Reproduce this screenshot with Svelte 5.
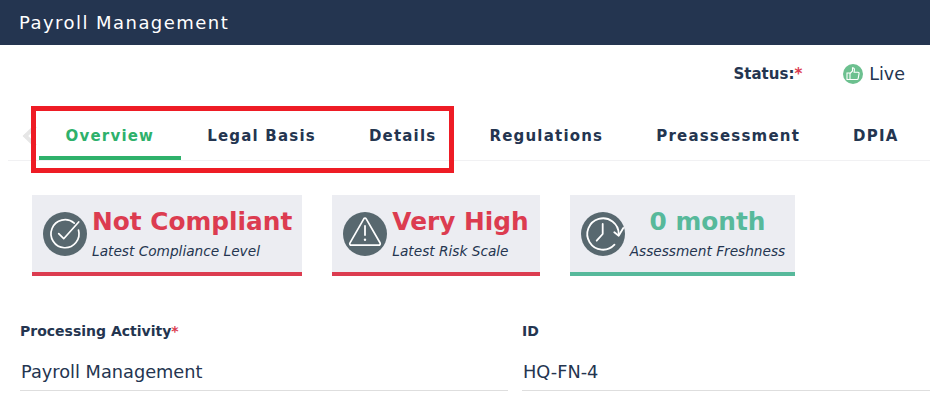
<script>
  const tabs = ["Overview", "Legal Basis", "Details", "Regulations", "Preassessment", "DPIA"];
  const active = "Overview";
</script>

<div class="page">
  <header class="topbar">Payroll Management</header>

  <div class="status-row">
    <span class="status-label">Status:<span class="req">*</span></span>
    <span class="status-value">
      <svg class="live-icon" viewBox="0 0 20 20" width="20" height="20" aria-hidden="true">
        <circle cx="10" cy="10" r="10" fill="#6cc08f" />
        <path d="M4 9h3v6.500H4zM7 9.500 9.500 7V3.800c1.400-.2 2 .8 1.900 2l-.3 2.400h4c.7 0 1.100.6 1 1.200l-.9 5c-.1.6-.5 1.100-1.100 1.100H7" fill="none" stroke="#fff" stroke-width="1.100" />
      </svg>
      Live
    </span>
  </div>

  <nav class="tabs">
    <span class="chevron"></span>
    {#each tabs as tab}
      <span class="tab" class:active={tab === active}>{tab}</span>
    {/each}
  </nav>

  <div class="highlight"></div>

  <section class="cards">
    <div class="card danger">
      <svg class="badge" viewBox="0 0 44 44" aria-hidden="true">
        <circle cx="22" cy="22" r="22" fill="#58686f" />
        <path d="M35.500 18a14 14 0 1 1-4.300-6.800" fill="none" stroke="#fff" stroke-width="1.700" stroke-linecap="round" />
        <path d="M15.700 21.700l5 5L35.700 10" fill="none" stroke="#fff" stroke-width="1.700" stroke-linecap="round" stroke-linejoin="round" />
      </svg>
      <div class="card-text">
        <div class="card-title">Not Compliant</div>
        <div class="card-sub">Latest Compliance Level</div>
      </div>
    </div>

    <div class="card danger">
      <svg class="badge" viewBox="0 0 44 44" aria-hidden="true">
        <circle cx="22" cy="22" r="22" fill="#58686f" />
        <path d="M20.800 6.800 7 30.800c-.7 1.200.1 2.400 1.300 2.400h27.400c1.200 0 2-1.200 1.300-2.400L23.200 6.800c-.6-1-1.800-1-2.400 0z" fill="none" stroke="#fff" stroke-width="1.700" stroke-linejoin="round" />
        <path d="M22 14v9" stroke="#fff" stroke-width="1.800" stroke-linecap="round" />
        <circle cx="22" cy="27.700" r="1.200" fill="#fff" />
      </svg>
      <div class="card-text">
        <div class="card-title">Very High</div>
        <div class="card-sub">Latest Risk Scale</div>
      </div>
    </div>

    <div class="card fresh">
      <svg class="badge" viewBox="0 0 44 44" aria-hidden="true">
        <circle cx="22" cy="22" r="22" fill="#58686f" />
        <path d="M37.700 22A15.700 15.700 0 1 0 33.500 32.700" fill="none" stroke="#fff" stroke-width="1.800" stroke-linecap="round" />
        <path d="M33.300 20.300l4.400 3.400 4.600-7.700" fill="none" stroke="#fff" stroke-width="1.800" stroke-linecap="round" stroke-linejoin="round" />
        <path d="M21.700 12v10l-6 6.700" fill="none" stroke="#fff" stroke-width="1.800" stroke-linecap="round" stroke-linejoin="round" />
      </svg>
      <div class="card-text">
        <div class="card-title">0 month</div>
        <div class="card-sub">Assessment Freshness</div>
      </div>
    </div>
  </section>

  <section class="fields">
    <div class="field">
      <div class="field-label">Processing Activity<span class="req">*</span></div>
      <div class="field-value">Payroll Management</div>
    </div>
    <div class="field">
      <div class="field-label">ID</div>
      <div class="field-value">HQ-FN-4</div>
    </div>
  </section>
</div>

<style>
  :global(body) {
    margin: 0;
    background: #fff;
  }

  .page {
    position: relative;
    width: 930px;
    height: 418px;
    overflow: hidden;
    font-family: "DejaVu Sans", Verdana, sans-serif;
    color: #243550;
  }

  .topbar {
    height: 45px;
    box-sizing: border-box;
    padding: 0 19px;
    line-height: 45px;
    background: #243550;
    color: #fff;
    font-size: 18px;
    letter-spacing: 1.450px;
  }

  .status-row {
    display: flex;
    justify-content: flex-end;
    align-items: center;
    height: 58px;
    padding-right: 25px;
  }

  .status-label {
    font-size: 15px;
    font-weight: 700;
    margin-right: 1px;
  }

  .req {
    color: #dc3c50;
  }

  .status-value {
    display: flex;
    align-items: center;
    gap: 6px;
    margin-left: 40px;
    font-size: 17.500px;
  }

  .live-icon {
    display: block;
  }

  .tabs {
    display: flex;
    align-items: flex-start;
    position: relative;
    height: 58px;
    margin-left: 8px;
    box-sizing: border-box;
    border-bottom: 1px solid #f1f1f3;
    padding-left: 31px;
  }

  .chevron {
    position: absolute;
    left: 18px;
    top: 25px;
    width: 12px;
    height: 12px;
    border-left: 4px solid #e6e6e6;
    border-bottom: 4px solid #e6e6e6;
    transform: rotate(45deg);
  }

  .tab {
    padding: 23px 26.500px 10px;
    line-height: 20px;
    font-size: 15px;
    font-weight: 700;
    letter-spacing: 1.200px;
    white-space: nowrap;
    border-bottom: 4px solid transparent;
  }

  .tab.active {
    color: #2eb16b;
    border-bottom-color: #2eb16b;
  }

  .highlight {
    position: absolute;
    left: 31px;
    top: 106px;
    width: 423px;
    height: 67px;
    box-sizing: border-box;
    border: 5px solid #ee1c25;
  }

  .cards {
    display: flex;
    gap: 30px;
    padding: 34px 0 0 32px;
  }

  .card {
    display: flex;
    align-items: center;
    box-sizing: border-box;
    height: 81px;
    padding: 0 10px 2px 11px;
    background: #ecedf2;
    border-bottom: 4px solid;
  }

  .card:nth-child(2) {
    padding-right: 11px;
  }

  .danger {
    border-color: #dc3c50;
  }

  .danger .card-title {
    color: #dc3c50;
  }

  .fresh {
    border-color: #57b99b;
  }

  .fresh .card-title {
    color: #57b99b;
    text-align: center;
  }

  .badge {
    flex: none;
    width: 44px;
    height: 44px;
    margin: 2px 5px 0 0;
  }

  .card-title {
    font-size: 24.800px;
    font-weight: 700;
    line-height: 30px;
    white-space: nowrap;
  }

  .card-sub {
    margin-top: 6px;
    font-size: 13.700px;
    font-style: italic;
    line-height: 16px;
    white-space: nowrap;
  }

  .fields {
    display: grid;
    grid-template-columns: 488px 1fr;
    column-gap: 14px;
    padding: 45px 0 0 20px;
  }

  .field-label {
    font-size: 14px;
    font-weight: 700;
    line-height: 20px;
  }

  .field-value {
    box-sizing: border-box;
    height: 50px;
    padding: 18px 0 0 1px;
    border-bottom: 1px solid #dedede;
    font-size: 17.750px;
    line-height: 26px;
  }
</style>
